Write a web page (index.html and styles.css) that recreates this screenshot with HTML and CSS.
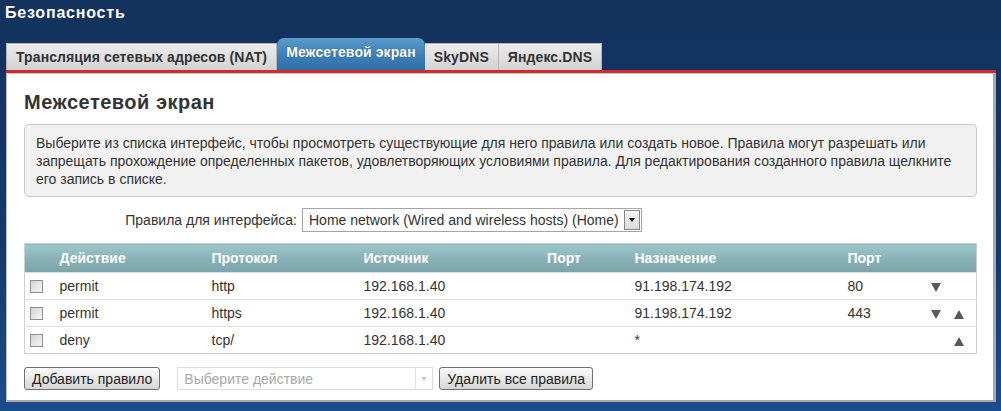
FILE: index.html
```html
<!DOCTYPE html>
<html lang="ru">
<head>
    <meta charset="UTF-8">
    <title>Безопасность</title>
    <link rel="stylesheet" href="styles.css">
</head>
<body>

    <h1 class="page-title">Безопасность</h1>

    <div class="tabs">
        <div class="tab">Трансляция сетевых адресов (NAT)</div>
        <div class="tab active">Межсетевой экран</div>
        <div class="tab">SkyDNS</div>
        <div class="tab">Яндекс.DNS</div>
    </div>
    <div class="tabs-line"></div>

    <div class="panel">
        <h2>Межсетевой экран</h2>

        <div class="info">
            Выберите из списка интерфейс, чтобы просмотреть существующие для него правила или создать новое. Правила могут разрешать или запрещать прохождение определенных пакетов, удовлетворяющих условиями правила. Для редактирования созданного правила щелкните его запись в списке.
        </div>

        <div class="form-row">
            <label class="form-label">Правила для интерфейса:</label>
            <div class="combo">
                <span class="combo-text">Home network (Wired and wireless hosts) (Home)</span>
                <span class="combo-btn"><span class="tri-down"></span></span>
            </div>
        </div>

        <table class="rules">
            <colgroup>
                <col style="width: 27px">
                <col style="width: 152px">
                <col style="width: 152px">
                <col style="width: 152px">
                <col style="width: 119px">
                <col style="width: 213px">
                <col style="width: 81px">
                <col style="width: 56px">
            </colgroup>
            <tr>
                <th></th>
                <th>Действие</th>
                <th>Протокол</th>
                <th>Источник</th>
                <th class="center">Порт</th>
                <th>Назначение</th>
                <th>Порт</th>
                <th></th>
            </tr>
            <tr>
                <td class="chk"><span class="checkbox"></span></td>
                <td>permit</td>
                <td>http</td>
                <td>192.168.1.40</td>
                <td></td>
                <td>91.198.174.192</td>
                <td>80</td>
                <td class="arrows"><span class="arrow down"></span><span class="arrow"></span></td>
            </tr>
            <tr>
                <td class="chk"><span class="checkbox"></span></td>
                <td>permit</td>
                <td>https</td>
                <td>192.168.1.40</td>
                <td></td>
                <td>91.198.174.192</td>
                <td>443</td>
                <td class="arrows"><span class="arrow down"></span><span class="arrow up"></span></td>
            </tr>
            <tr>
                <td class="chk"><span class="checkbox"></span></td>
                <td>deny</td>
                <td>tcp/</td>
                <td>192.168.1.40</td>
                <td></td>
                <td>*</td>
                <td></td>
                <td class="arrows"><span class="arrow"></span><span class="arrow up"></span></td>
            </tr>
        </table>

        <div class="actions">
            <button class="btn">Добавить правило</button>
            <div class="combo disabled">
                <span class="combo-text">Выберите действие</span>
                <span class="combo-btn"><span class="tri-down"></span></span>
            </div>
            <button class="btn">Удалить все правила</button>
        </div>
    </div>

</body>
</html>
```

FILE: styles.css
```css
body {
    margin: 0;
    height: 411px;
    font-family: "Liberation Sans", Arial, sans-serif;
    font-size: 14px;
    color: #333;
    background: linear-gradient(#13325d, #143a6c 60%, #1a4d8e);
    overflow: hidden;
}
.page-title {
    margin: 0;
    padding-left: 5px;
    font-size: 16px;
    letter-spacing: 0.8px;
    line-height: 26px;
    color: #fff;
}
.tabs {
    display: flex;
    align-items: flex-end;
    margin: 12px 0 0 6px;
    height: 32px;
}
.tab {
    height: 26px;
    line-height: 27px;
    padding: 0 9px;
    font-size: 14px;
    letter-spacing: 0.1px;
    font-weight: bold;
    color: #333;
    background: linear-gradient(#ececec, #d2d2d2);
    border: 1px solid #b4b4b4;
    border-bottom: none;
}
.tab + .tab {
    border-left: none;
}
.tab.active {
    height: 32px;
    line-height: 29px;
    padding: 0 9px;
    color: #fff;
    background: linear-gradient(#5b9ccd, #3a7db5 60%, #2f70a8);
    border: none;
    border-radius: 7px 7px 0 0;
    text-shadow: 0 0 1px #1d4a73;
}
.tabs-line {
    margin-left: 6px;
    margin-right: 5px;
    height: 3px;
    background: #cf2a2e;
}
.panel {
    margin-left: 6px;
    margin-right: 5px;
    height: 329px;
    box-sizing: border-box;
    padding: 15px 16px 0 17px;
    background: #fff;
    border-top: 1px solid #c6c6c6;
    border-left: 1px solid #bbb;
    border-right: 3px solid #a9a9a9;
    border-bottom: 2px solid #a9a9a9;
}
.panel h2 {
    margin: 0;
    font-size: 20px;
    letter-spacing: 0.5px;
    line-height: 26px;
    color: #333;
}
.info {
    margin-top: 9px;
    padding: 9px 11px 8px;
    line-height: 18px;
    background: #f1f1f1;
    border: 1px solid #c8c8c8;
    border-radius: 5px;
}
.form-row {
    display: flex;
    align-items: center;
    margin-top: 11px;
}
.form-label {
    width: 273px;
    margin-right: 5px;
    text-align: right;
}
.combo {
    display: flex;
    align-items: center;
    height: 22px;
    border: 1px solid #a5a5a5;
    background: #fff;
}
.form-row .combo {
    width: 338px;
}
.combo-text {
    flex: 1;
    padding-left: 6px;
    white-space: nowrap;
    overflow: hidden;
}
.combo-btn {
    display: flex;
    align-items: center;
    justify-content: center;
    width: 14px;
    height: 18px;
    margin-right: 1px;
    background: linear-gradient(#f4f4f4, #dcdcdc);
    border: 1px solid #888;
}
.tri-down {
    width: 0;
    height: 0;
    border-left: 3px solid transparent;
    border-right: 3px solid transparent;
    border-top: 4px solid #000;
}
.rules {
    width: 952px;
    margin-top: 11px;
    table-layout: fixed;
    border-collapse: collapse;
    border: 1px solid #cfcfcf;
}
.rules th {
    height: 28px;
    padding: 0 8px;
    text-align: left;
    font-size: 14px;
    color: #fff;
    background: linear-gradient(#9cc7cb, #86b0b5 55%, #7aa4a9);
}
.rules th.center {
    text-align: center;
    padding-right: 14px;
}
.rules td {
    height: 26px;
    padding: 0 8px;
    border-top: 1px solid #dedede;
    white-space: nowrap;
}
.rules td.chk {
    padding: 0 0 0 5px;
}
.checkbox {
    display: block;
    width: 11px;
    height: 11px;
    border: 1px solid #8f8f8f;
    background: linear-gradient(135deg, #d4d4d4, #f6f6f6);
}
.rules td.arrows {
    padding: 0 0 0 10px;
}
.arrow {
    display: inline-block;
    width: 10px;
    height: 9px;
    margin-right: 13px;
    vertical-align: middle;
}
.arrow.down {
    width: 0;
    height: 0;
    border-left: 5px solid transparent;
    border-right: 5px solid transparent;
    border-top: 9px solid #595959;
}
.arrow.up {
    width: 0;
    height: 0;
    border-left: 5px solid transparent;
    border-right: 5px solid transparent;
    border-bottom: 9px solid #595959;
}
.actions {
    display: flex;
    align-items: center;
    margin-top: 13px;
}
.btn {
    height: 23px;
    padding: 0 7px;
    font-family: "Liberation Sans", Arial, sans-serif;
    font-size: 14px;
    color: #222;
    background: linear-gradient(#fbfbfb, #e4e4e4 60%, #d6d6d6);
    border: 1px solid #707070;
    border-radius: 3px;
}
.combo.disabled {
    width: 254px;
    height: 21px;
    margin: 0 6px 0 17px;
    color: #a8a8a8;
    border-color: #dcdcdc;
}
.combo.disabled .combo-btn {
    width: 16px;
    height: 21px;
    margin-right: 0;
    background: #fff;
    border: none;
    border-left: 1px solid #e2e2e2;
}
.combo.disabled .tri-down {
    border-top-color: #c8c8c8;
}
```
